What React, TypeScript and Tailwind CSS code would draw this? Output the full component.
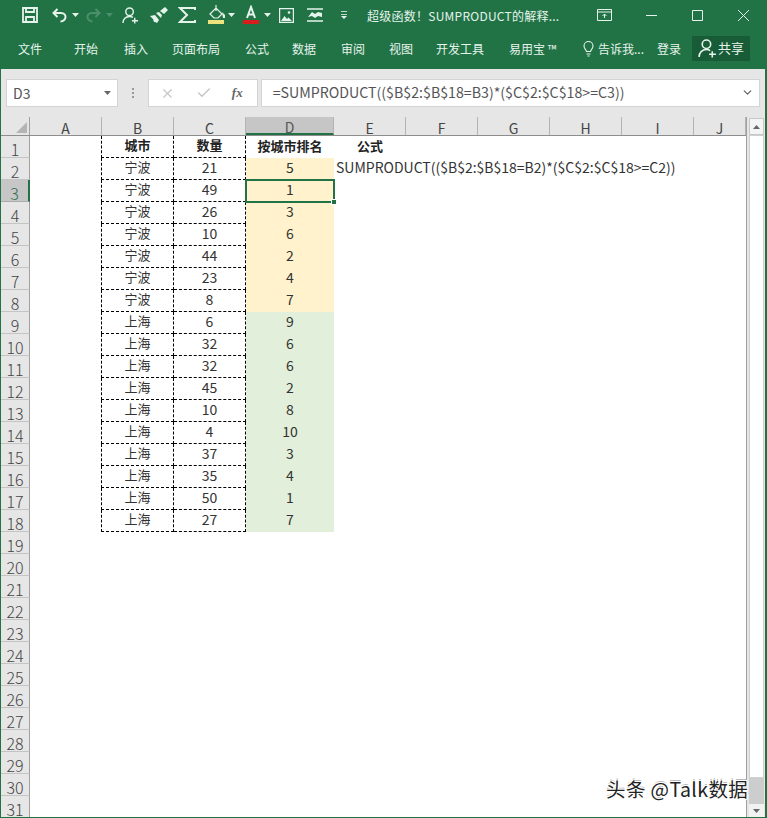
import React from "react";
import { X, Check, ChevronDown } from "lucide-react";

const Caret = ({ className = "" }: { className?: string }) => (
  <svg width="7" height="4" viewBox="0 0 7 4" className={className}><path d="M0 0h7L3.5 4z" fill="currentColor" /></svg>
);

const PersonPlus = ({ size, className = "" }: { size: number; className?: string }) => (
  <svg width={size} height={size} viewBox="0 0 18 18" className={className} fill="none" stroke="currentColor" strokeWidth="1.5">
    <circle cx="8" cy="5" r="4" />
    <path d="M1 17c0-4 3-7 7-7 1.500 0 2.500.3 3.500 1M13.500 11.500v6M10.500 14.500h6.500" />
  </svg>
);

const tabs: [string, string][] = [
  ["文件", "w-[74px] pl-[18px]"],
  ["开始", "w-[50px]"],
  ["插入", "w-[48px]"],
  ["页面布局", "w-[73px]"],
  ["公式", "w-[47px]"],
  ["数据", "w-[49px]"],
  ["审阅", "w-[48px]"],
  ["视图", "w-[47px]"],
  ["开发工具", "w-[73px]"],
  ["易用宝 ™", "w-[73px]"],
];

const cols: [string, string][] = [
  ["A", "w-[72px]"],
  ["B", "w-[72px]"],
  ["C", "w-[72px]"],
  ["D", "w-[88px]"],
  ["E", "w-[72px]"],
  ["F", "w-[72px]"],
  ["G", "w-[72px]"],
  ["H", "w-[72px]"],
  ["I", "w-[72px]"],
  ["J", "w-[52px]"],
];

const data: [string, string, string][] = [
  ["宁波", "21", "5"], ["宁波", "49", "1"], ["宁波", "26", "3"], ["宁波", "10", "6"], ["宁波", "44", "2"], ["宁波", "23", "4"], ["宁波", "8", "7"],
  ["上海", "6", "9"], ["上海", "32", "6"], ["上海", "32", "6"], ["上海", "45", "2"], ["上海", "10", "8"], ["上海", "4", "10"], ["上海", "37", "3"], ["上海", "35", "4"], ["上海", "50", "1"], ["上海", "27", "7"],
];

const dash = "border-r border-b border-dashed border-black";

function SheetRow({ n }: { n: number }) {
  const row = n >= 2 && n <= 18 ? data[n - 2] : null;
  const selected = n === 3;
  const head = "shrink-0 flex items-center justify-center pb-[3px] font-bold text-[13px] text-[#222]";
  const cell = "shrink-0 flex items-center justify-center pb-[3px] text-[#333]";
  return (
    <div className="flex h-[22px]">
      <div className={`w-[29px] shrink-0 flex items-end justify-center text-[16px] leading-[16px] font-light border-b border-r ${selected ? "bg-[#c6c6c6] text-[#2f6b4c] border-b-[#ababab] border-r-[#217346] border-r-2" : "bg-[#e6e6e6] text-[#444] border-b-[#c4c4c4] border-r-[#9f9f9f]"}`}>{n}</div>
      <div className="w-[71px] shrink-0" />
      {n === 1 ? (
        <>
          <div className={`w-[73px] border-l ${head} ${dash}`}>城市</div>
          <div className={`w-[72px] ${head} ${dash}`}>数量</div>
          <div className={`w-[88px] ${head}`}>按城市排名</div>
          <div className={`w-[72px] ${head}`}>公式</div>
        </>
      ) : row ? (
        <>
          <div className={`w-[73px] border-l text-[13px] ${cell} ${dash}`}>{row[0]}</div>
          <div className={`w-[72px] text-[14px] ${cell} ${dash}`}>{row[1]}</div>
          <div className={`relative w-[88px] text-[14px] ${cell} ${n <= 8 ? "bg-[#fff2cc]" : "bg-[#e2efda]"}`}>
            {row[2]}
            {selected && (
              <>
                <div className="absolute z-10 -left-px -top-px -right-px -bottom-px border-2 border-[#217346]" />
                <div className="absolute z-20 -right-[3px] -bottom-[3px] w-[6px] h-[6px] bg-[#217346] border border-white" />
              </>
            )}
          </div>
          <div className="w-[72px] shrink-0 flex items-center pb-[3px] pl-[2px] text-[14px] text-[#333] whitespace-nowrap">
            {n === 2 ? "SUMPRODUCT(($B$2:$B$18=B2)*($C$2:$C$18>=C2))" : ""}
          </div>
        </>
      ) : null}
    </div>
  );
}

export default function App() {
  return (
    <div className="w-[767px] h-[818px] overflow-hidden relative bg-[#217346] font-['Noto_Sans_CJK_SC','Noto_Sans',sans-serif] flex flex-col">
      {/* Title bar */}
      <div className="h-[32px] shrink-0 flex items-center pb-[2px] text-[#e6f3ec]">
        <svg width="16" height="16" viewBox="0 0 16 16" className="ml-[22px]" fill="none" stroke="currentColor" strokeWidth="1.8">
          <path d="M1 1h14v14H1zM4 1v4h8V1M4 15V10h8v5" />
        </svg>
        <svg width="15" height="15" viewBox="0 0 15 15" className="ml-[14px]" fill="none" stroke="currentColor" strokeWidth="2">
          <path d="M5.500 1L1.500 5l4 4M1.500 5H9c3 0 4.500 2 4.500 4s-2 4.500-5 4.500" />
        </svg>
        <Caret className="ml-[5px]" />
        <svg width="15" height="15" viewBox="0 0 15 15" className="ml-[7px] text-[#4c8f6b]" fill="none" stroke="currentColor" strokeWidth="2">
          <path d="M9.500 1l4 4-4 4M13.500 5H6C3 5 1.500 7 1.500 9s2 4.500 5 4.500" />
        </svg>
        <Caret className="ml-[5px] text-[#4c8f6b]" />
        <PersonPlus size={17} className="ml-[9px]" />
        <svg width="18" height="16" viewBox="0 0 18 16" className="ml-[11px]"><path d="M0 9l5-1 4 5-2 3-2-1-1 0-1-3zM6 6l3-1 3 3-1 3zM10 4l5-4 3 3-4 4z" fill="currentColor" /></svg>
        <svg width="18" height="16" viewBox="0 0 18 16" className="ml-[10px]" fill="none" stroke="currentColor" strokeWidth="2">
          <path d="M17 3V1H2l7 7-7 7h15v-2" />
        </svg>
        <svg width="20" height="20" viewBox="0 0 20 20" className="ml-[12px]">
          <path d="M2 9l6-6 6 6-4 4H6zM8 0v6" fill="none" stroke="currentColor" strokeWidth="1.2" />
          <path d="M14 7l3 3v3h-2z" fill="currentColor" />
          <rect x="0" y="15" width="16" height="4" fill="#ece27e" />
        </svg>
        <Caret />
        <svg width="16" height="20" viewBox="0 0 16 20" className="ml-[8px]">
          <path d="M4 13L8 2l4 11M5.500 9.500h5" fill="none" stroke="currentColor" strokeWidth="2" />
          <rect x="0" y="15" width="16" height="4" fill="#d91c1c" />
        </svg>
        <Caret className="ml-[5px]" />
        <svg width="15" height="15" viewBox="0 0 15 15" className="ml-[8px]" fill="none" stroke="currentColor" strokeWidth="1.2">
          <path d="M.6.6h13.800v13.800H.6z" />
          <path d="M2 13l3.500-5 2.500 3 1.500-1.500L13 13z" fill="currentColor" stroke="none" />
          <circle cx="10" cy="4.500" r="1.300" fill="currentColor" stroke="none" />
        </svg>
        <svg width="16" height="14" viewBox="0 0 16 14" className="ml-[13px]">
          <path d="M0 1h16M0 13h16" stroke="currentColor" strokeWidth="1.500" />
          <path d="M1 9l4-5 3 2 3-2 4 1v4l-4-1-3 2-3-2z" fill="currentColor" />
        </svg>
        <svg width="6" height="8" viewBox="0 0 6 8" className="ml-[18px]"><path d="M0 .5h6M0 3.500h6" stroke="currentColor" strokeWidth="0.8" /><path d="M0 5h6L3 8z" fill="currentColor" /></svg>
        <div className="ml-[20px] w-[200px] pt-[2px] text-[12px] tracking-[0.25px] whitespace-nowrap">超级函数！SUMPRODUCT的解释...</div>
        <svg width="15" height="12" viewBox="0 0 15 12" className="ml-[30px]"><path d="M.5.5h14v11H.5zM.5 3h14M7.500 9V5M5.500 7l2-2 2 2" fill="none" stroke="currentColor" /></svg>
        <svg width="11" height="11" viewBox="0 0 11 11" className="ml-[34px]"><path d="M0 5.500h11" stroke="currentColor" /></svg>
        <svg width="11" height="11" viewBox="0 0 11 11" className="ml-[35px]"><path d="M.5.5h10v10H.5z" fill="none" stroke="currentColor" /></svg>
        <svg width="11" height="11" viewBox="0 0 11 11" className="ml-[35px]"><path d="M0 0l11 11M11 0L0 11" stroke="currentColor" /></svg>
      </div>
      {/* Tabs */}
      <div className="h-[37px] shrink-0 flex items-center pb-[4px] text-[12px] text-[#e6f3ec] whitespace-nowrap">
        {tabs.map(([t, w]) => (
          <div key={t} className={`${w} shrink-0`}>{t}</div>
        ))}
        <svg width="11" height="16" viewBox="0 0 11 16" fill="none" stroke="currentColor" strokeWidth="1.100" className="ml-[1px]">
          <path d="M3.500 10.500C3 8.500 1 7.500 1 5a4.500 4.500 0 0 1 9 0c0 2.500-2 3.500-2.500 5.500zM3.500 13h4M4.500 15h2" />
        </svg>
        <span className="ml-[4px] w-[59px]">告诉我...</span>
        <span className="w-[35px]">登录</span>
        <div className="w-[58px] h-[25px] bg-[#185c37] flex items-center pl-[6px] gap-[1px] text-[13px]">
          <PersonPlus size={19} />
          <span className="pb-[2px]">共享</span>
        </div>
      </div>
      {/* Sheet window */}
      <div className="flex-1 ml-[1px] mr-[2px] mb-[1px] bg-[#e6e6e6] flex flex-col overflow-hidden">
        {/* Formula bar */}
        <div className="h-[48px] shrink-0 flex items-start pt-[10px] pl-[5px] pr-[5px]">
          <div className="w-[112px] h-[28px] bg-white border border-[#d4d4d4] flex items-center justify-between pl-[6px] pr-[6px] text-[14px] text-[#555]">
            D3 <Caret className="text-[#666]" />
          </div>
          <div className="w-[30px] h-[28px] flex flex-col items-center justify-center gap-[2px]">
            <div className="w-[2px] h-[2px] bg-[#999]" /><div className="w-[2px] h-[2px] bg-[#999]" /><div className="w-[2px] h-[2px] bg-[#999]" />
          </div>
          <div className="w-[110px] h-[28px] bg-white border border-[#d4d4d4] flex items-center pl-[11px] text-[#c4c4c4]">
            <X size={15} strokeWidth={1.8} />
            <Check size={16} strokeWidth={2} className="ml-[21px]" />
            <span className="ml-[20px] font-['Liberation_Serif',serif] italic font-bold text-[13px] text-[#666]">fx</span>
          </div>
          <div className="ml-[3px] w-[500px] h-[28px] bg-white border border-[#d4d4d4] flex items-center pl-[11px] pr-[5px] pb-[1px] text-[14.2px] text-[#555] justify-between whitespace-nowrap">
            <span>=SUMPRODUCT(($B$2:$B$18=B3)*($C$2:$C$18&gt;=C3))</span>
            <ChevronDown size={13} strokeWidth={2.4} className="text-[#666]" />
          </div>
        </div>
        <div className="flex-1 flex min-h-0">
          <div className="w-[745px] shrink-0 flex flex-col">
            {/* Column headers */}
            <div className="h-[19px] shrink-0 flex border-b border-[#8e8e8e]">
              <div className="w-[29px] shrink-0 border-r border-[#9f9f9f] flex items-end justify-end pr-[2px] pb-[2px]">
                <svg width="11" height="11" viewBox="0 0 11 11"><path d="M11 0v11H0z" fill="#b4b4b4" /></svg>
              </div>
              {cols.map(([c, w]) => (
                <div key={c} className={`${w} shrink-0 flex items-center justify-center pt-[3px] text-[14px] leading-none border-r border-[#b4b4b4] ${c === "D" ? "bg-[#c6c6c6] text-[#555] border-b-2 border-b-[#217346]" : "text-[#444]"}`}>{c}</div>
              ))}
            </div>
            {/* Grid */}
            <div className="flex-1 bg-white overflow-hidden">
              {Array.from({ length: 31 }, (_, i) => <SheetRow key={i} n={i + 1} />)}
            </div>
          </div>
          {/* Scrollbar */}
          <div className="w-[19px] shrink-0 flex flex-col bg-[#e6e6e6] border-l border-[#a0a0a0] pl-[2px] pr-[1px]">
            <div className="h-[17px] mt-[1px] bg-[#f4f4f4] border border-[#c8c8c8] flex items-center justify-center text-[#666]"><Caret className="rotate-180" /></div>
            <div className="flex-1 bg-white border border-[#d0d0d0]" />
            <div className="h-[26px] bg-[#cdcdcd]" />
            <div className="h-[13px] bg-[#f2f2f2] flex items-center justify-center text-[#666]"><Caret /></div>
          </div>
        </div>
      </div>
      {/* Watermark */}
      <div className="absolute left-[606px] top-[776px] text-[19.5px] leading-[26px] tracking-[0.4px] text-[#222] whitespace-nowrap [text-shadow:1px_1px_0_#fff,-1px_-1px_0_#fff,1px_-1px_0_#fff,-1px_1px_0_#fff,0_-2px_0_#bbb]">头条 @Talk数据</div>
    </div>
  );
}
